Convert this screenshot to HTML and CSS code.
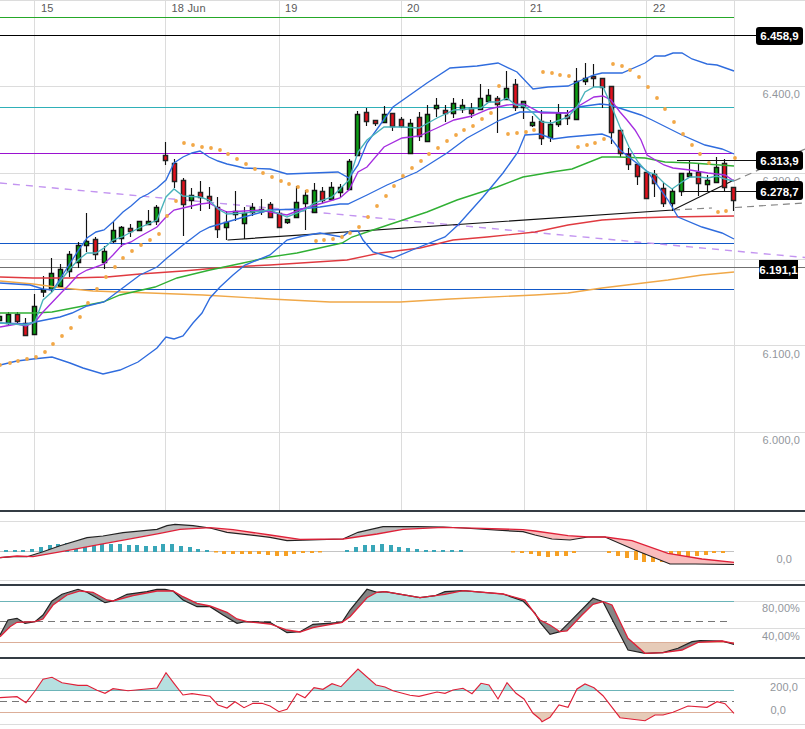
FILE: index.html
```html
<!DOCTYPE html>
<html lang="en">
<head>
<meta charset="utf-8">
<title>Chart</title>
<link rel="stylesheet" href="styles.css">
</head>
<body>
<main class="chart">
<section class="pane pane-main">
<svg class="canvas" viewBox="0 0 805 510" width="805" height="510">
  <path class="grid" d="M0 .5H805M0 86.5H805M0 173.5H805M0 259.5H805M0 345.5H805M0 432.5H805M34.5 0V510M165.5 0V510M279.5 0V510M401.5 0V510M524.5 0V510M646.5 0V510M734.5 0V510"/>
  <g class="dates">
    <text x="41" y="12">15</text><text x="171.5" y="12">18 Jun</text><text x="285" y="12">19</text><text x="407" y="12">20</text><text x="530" y="12">21</text><text x="653" y="12">22</text>
  </g>
  <g class="axis">
    <text x="800" y="98">6.400,0</text><text x="800" y="185">6.300,0</text><text x="800" y="358">6.100,0</text><text x="800" y="444">6.000,0</text>
  </g>
  <path class="h-green" d="M0 17.5H734"/>
  <path class="h-black" d="M0 35.5H760"/>
  <path class="h-teal" d="M0 107.5H734"/>
  <path class="h-purple" d="M0 153.5H734"/>
  <path class="h-blue" d="M0 243.5H734M0 289.5H734"/>
  <path class="h-grey" d="M0 267.5H805"/>
  <path class="h-violet" d="M0 183L805 257.5"/>
  <path class="trend-dash" d="M673 210L712 208M735 207.5L805 203M734 181L805 149"/>
  <path class="trend" d="M227.5 240L673 210L734 180M677 160.5H760M682 191.5H760"/>
  <path class="wick" d="M-.5 313V322M8.5 312V325M17.5 312V323M25.5 318V335M34.5 294V334M43.5 276V297M51.5 258V292M60.5 264V287M69.5 251V277M78.5 242V268M86.5 213V252M95.5 237V260M104.5 246V269M113.5 222V243M121.5 226V247M130.5 224V237M139.5 221V231M148.5 210V225M156.5 205V225M165.5 142V165M174.5 159V188M183.5 178V236M191.5 188V209M200.5 181V211M209.5 187V209M217.5 197V238M226.5 211V240M235.5 191V221M244.5 207V239M252.5 203V216M261.5 199V215M270.5 202V218M279.5 210V227M287.5 219V224M296.5 186V217M305.5 190V230M314.5 183V213M322.5 187V203M331.5 182V199M340.5 184V197M349.5 159V189M357.5 111V155M366.5 108V126M375.5 120V126M384.5 106V123M392.5 113V131M401.5 117V128M410.5 119V153M419.5 112V141M427.5 105V141M436.5 98V117M445.5 105V122M453.5 98V118M462.5 99V113M471.5 103V118M480.5 84V109M488.5 89V101M497.5 96V133M506.5 71V99M515.5 79V111M523.5 101V119M532.5 116V127M541.5 110V145M550.5 120V142M558.5 104V127M567.5 110V125M576.5 68V119M585.5 63V85M593.5 64V87M602.5 78V108M611.5 86V144M620.5 130V157M628.5 148V170M637.5 164V185M646.5 172V198M654.5 170V197M663.5 183V207M672.5 188V211M681.5 173V196M689.5 161V177M698.5 163V196M707.5 175V192M716.5 157V183M724.5 159V192M733.5 187V211"/>
  <path class="body-green" d="M-2.5 316.5h4V320.5h-4zM6.5 314.5h4V323.5h-4zM32.5 306.5h4V334.5h-4zM41.5 290h4V292h-4zM49.5 273.5h4V289.5h-4zM58.5 269.5h4V286.5h-4zM67.5 254.5h4V271.5h-4zM76.5 245.5h4V262.5h-4zM84.5 241.5h4V245.5h-4zM102.5 251.5h4V262.5h-4zM111.5 230.5h4V241.5h-4zM119.5 227.5h4V238.5h-4zM137.5 221.5h4V230.5h-4zM146.5 221.5h4V224.5h-4zM154.5 207.5h4V221.5h-4zM189.5 195.5h4V200.5h-4zM224.5 222.5h4V227.5h-4zM233.5 211.5h4V214.5h-4zM242.5 213.5h4V223.5h-4zM250.5 207.5h4V212.5h-4zM259.5 209.5h4V211.5h-4zM285.5 219.5h4V222.5h-4zM294.5 202.5h4V217.5h-4zM303.5 195.5h4V203.5h-4zM312.5 190.5h4V212.5h-4zM329.5 187.5h4V199.5h-4zM338.5 187.5h4V192.5h-4zM347.5 161.5h4V189.5h-4zM355.5 114.5h4V155.5h-4zM382.5 114.5h4V122.5h-4zM408.5 123.5h4V153.5h-4zM425.5 114.5h4V141.5h-4zM434.5 105.5h4V108.5h-4zM451.5 103.5h4V113.5h-4zM460.5 105.5h4V109.5h-4zM478.5 98.5h4V109.5h-4zM486.5 95.5h4V101.5h-4zM504.5 88.5h4V99.5h-4zM521.5 101.5h4V107.5h-4zM530.5 122.5h4V125.5h-4zM548.5 124.5h4V137.5h-4zM556.5 113.5h4V124.5h-4zM574.5 81.5h4V119.5h-4zM583.5 78.5h4V81.5h-4zM670.5 191.5h4V203.5h-4zM679.5 173.5h4V191.5h-4zM687.5 173.5h4V176.5h-4zM705.5 180.5h4V184.5h-4zM714.5 167.5h4V182.5h-4z"/>
  <path class="body-red" d="M15.5 314.5h4V321.5h-4zM23.5 323.5h4V335.5h-4zM93.5 239.5h4V254.5h-4zM128.5 228.5h4V231.5h-4zM163.5 155.5h4V160.5h-4zM172.5 163.5h4V181.5h-4zM181.5 180.5h4V204.5h-4zM198.5 192.5h4V197.5h-4zM207.5 196.5h4V200.5h-4zM215.5 207.5h4V229.5h-4zM268.5 204.5h4V217.5h-4zM277.5 213.5h4V227.5h-4zM320.5 191.5h4V200.5h-4zM364.5 112.5h4V121.5h-4zM373.5 120.5h4V123.5h-4zM390.5 113.5h4V126.5h-4zM399.5 119.5h4V126.5h-4zM417.5 117.5h4V136.5h-4zM443.5 110.5h4V113.5h-4zM469.5 108.5h4V113.5h-4zM495.5 98.5h4V104.5h-4zM513.5 84.5h4V107.5h-4zM539.5 121.5h4V138.5h-4zM565.5 115.5h4V118.5h-4zM591.5 76.5h4V78.5h-4zM600.5 78.5h4V87.5h-4zM609.5 86.5h4V132.5h-4zM618.5 130.5h4V153.5h-4zM626.5 154.5h4V164.5h-4zM635.5 164.5h4V176.5h-4zM644.5 172.5h4V198.5h-4zM652.5 174.5h4V183.5h-4zM661.5 188.5h4V203.5h-4zM696.5 172.5h4V183.5h-4zM722.5 163.5h4V187.5h-4zM731.5 187.5h4V200.5h-4z"/>
  <polyline class="ma-orange" points="0,281 33,284 63,288 93,291 150,293 203,295 270,299 330,302 400,302 450,299 535,295 568,293 602,288 635,284 668,280 702,275 734,272"/>
  <polyline class="ma-red" points="0,277 33,278 70,278 107,277 140,274 183,271 217,268 250,266 270,265 347,260 380,253 420,248 453,240 487,237 535,232 568,225 602,220 635,218 668,217 734,216"/>
  <polyline class="ma-green" points="0,313 35,313 52,312 78,307 103,302 120,295 155,287 177,278 210,270 243,263 270,257 297,253 342,243 352,237 373,230 403,220 427,212 457,200 497,187 523,177 535,175 552,172 572,169 602,157 618,157 645,158 665,162 692,163 734,166"/>
  <polyline class="bb" points="0,283 30,285 43,289 53,290 67,268 78,251 87,238 96,232 104,230 113,222 123,212 131,206 140,198 148,194 157,188 166,180 174,163 183,157 192,153 200,151 209,157 218,161 227,164 236,166 244,168 270,169 287,174 313,173 338,172 349,178 358,165 367,143 380,125 393,107 427,83 450,68 477,66 498,63 517,72 533,89 548,87 568,86 577,82 594,75 602,73 622,73 645,63 655,56 665,56 673,53 682,53 692,59 707,64 717,65 734,71"/>
  <polyline class="bb" points="0,323 26,324 35,322 60,317 72,313 87,306 104,302 120,290 140,275 157,267 167,258 183,245 200,232 210,227 227,222 244,217 270,210 300,209 320,207 340,204 348,204 367,195 387,185 417,172 447,153 467,138 500,120 520,112 540,112 568,113 578,107 600,104 610,105 641,115 652,120 682,135 705,145 722,149 734,154"/>
  <polyline class="bb" points="0,365 17,361 33,359 52,357 70,363 83,368 103,374 120,370 138,362 157,348 166,337 174,339 183,336 193,323 202,313 210,298 220,287 233,275 245,265 270,255 287,240 303,236 320,233 342,237 350,231 358,231 363,240 373,252 393,258 417,248 445,237 458,225 483,197 503,173 518,152 525,135 540,134 553,139 568,137 602,134 610,137 620,150 648,172 668,200 678,217 702,227 722,233 734,239"/>
  <polyline class="ma-purple" points="0,327 17,324 26,326 35,322 43,312 61,293 69,285 78,275 87,270 96,267 104,264 113,255 122,245 131,242 139,237 157,227 166,217 174,210 183,208 200,204 209,203 218,208 227,212 244,211 262,210 270,212 287,215 305,208 323,203 340,198 349,190 358,172 367,167 384,147 402,138 419,136 437,128 454,120 472,116 489,109 507,105 524,104 541,113 568,113 577,107 594,97 603,96 611,100 620,112 627,120 635,130 641,140 647,155 664,165 673,168 690,170 708,173 725,175 734,181"/>
  <polyline class="ma-teal" points="0,323 26,325 35,322 43,300 52,292 61,280 69,270 78,260 87,253 96,253 104,248 113,240 122,237 139,228 157,220 166,197 174,189 183,196 200,197 209,200 218,209 227,214 244,213 262,211 270,210 287,217 305,210 314,203 332,197 349,180 358,152 367,140 384,127 402,127 419,128 437,118 454,110 481,108 489,102 498,102 507,98 516,105 524,106 533,113 542,122 552,123 568,117 577,107 585,92 594,87 603,87 611,105 620,127 629,147 638,162 647,172 655,174 664,183 672,189 682,182 690,177 699,177 708,178 717,176 725,179 734,181"/>
  <path class="sar" d="M0 365h0M10 363h0M18 361h0M27 359h0M36 357h0M45 352h0M53 344h0M62 336h0M71 328h0M80 317h0M88 303h0M97 289h0M106 277h0M115 267h0M123 258h0M132 251h0M141 245h0M150 240h0M159 234h0M167 216h0M176 201h0M184 143h0M193 145h0M202 147h0M211 148h0M220 150h0M228 154h0M237 159h0M246 164h0M255 169h0M263 173h0M272 177h0M281 181h0M289 184h0M298 187h0M307 191h0M316 241h0M324 240h0M333 239h0M342 237h0M350 233h0M359 227h0M368 217h0M377 206h0M386 196h0M394 186h0M403 176h0M412 168h0M421 161h0M429 154h0M438 148h0M447 141h0M456 135h0M464 130h0M473 126h0M482 119h0M491 113h0M499 86h0M508 134h0M517 133h0M526 132h0M534 130h0M543 72h0M552 73h0M560 75h0M569 76h0M578 147h0M587 145h0M595 143h0M604 139h0M613 64h0M622 66h0M630 70h0M639 77h0M648 87h0M657 98h0M665 109h0M674 122h0M683 134h0M692 145h0M700 154h0M709 163h0M718 212h0M726 211h0M735 158h0"/>
  <g class="badge">
    <rect x="756" y="27" width="47" height="18" rx="3"/><text x="779.5" y="40">6.458,9</text>
    <rect x="756" y="151" width="47" height="19" rx="3"/><text x="779.5" y="164.5">6.313,9</text>
    <rect x="756" y="181" width="47" height="19" rx="3"/><text x="779.5" y="195.5">6.278,7</text>
    <rect x="759" y="260" width="39" height="19"/><text x="778.5" y="274">6.191,1</text>
  </g>
</svg>
</section>

<section class="pane">
<svg class="canvas" viewBox="0 512 805 72" width="805" height="72">
  <defs>
    <clipPath id="macd-up"><rect x="0" y="512" width="210" height="72"/><rect x="343" y="512" width="140" height="72"/></clipPath>
    <clipPath id="macd-down"><rect x="210" y="512" width="133" height="72"/><rect x="483" y="512" width="251" height="72"/></clipPath>
  </defs>
  <path class="grid" d="M0 521.5H805M0 580.5H805"/>
  <path class="zero" d="M0 551.5H734"/>
  <path class="hist-teal" d="M4 550h4v2h-4zM13 550h4v2h-4zM21 550h4v2h-4zM30 549h4v3h-4zM39 547h4v5h-4zM48 545h4v7h-4zM56 544h4v8h-4zM65 543h4v9h-4zM74 542h4v10h-4zM83 542h4v10h-4zM92 544h4v8h-4zM100 544h4v8h-4zM109 544h4v8h-4zM118 544h4v8h-4zM127 545h4v7h-4zM135 545h4v7h-4zM144 546h4v6h-4zM153 546h4v6h-4zM161 544h4v8h-4zM170 544h4v8h-4zM179 546h4v6h-4zM188 547h4v5h-4zM196 549h4v3h-4zM205 550h4v2h-4zM345 550h4v2h-4zM354 547h4v5h-4zM363 545h4v7h-4zM371 545h4v7h-4zM380 544h4v8h-4zM389 545h4v7h-4zM397 547h4v5h-4zM406 548h4v4h-4zM415 549h4v3h-4zM424 550h4v2h-4zM432 550h4v2h-4zM441 550h4v2h-4zM450 550h4v2h-4zM459 550h4v2h-4z"/>
  <path class="hist-orange" d="M214 551h4v1.5h-4zM222 551h4v3h-4zM231 551h4v3h-4zM240 551h4v3h-4zM248 551h4v3h-4zM257 551h4v3h-4zM266 551h4v4h-4zM275 551h4v5h-4zM284 551h4v5h-4zM292 551h4v3h-4zM301 551h4v2h-4zM310 551h4v2h-4zM318 551h4v1.5h-4zM511 551h4v1.5h-4zM520 551h4v2h-4zM529 551h4v3h-4zM537 551h4v5h-4zM546 551h4v6h-4zM555 551h4v5h-4zM564 551h4v5h-4zM572 551h4v2h-4zM607 551h4v2h-4zM616 551h4v5h-4zM625 551h4v7h-4zM634 551h4v9h-4zM642 551h4v11h-4zM651 551h4v11h-4zM660 551h4v11h-4zM669 551h4v10h-4zM677 551h4v8h-4zM686 551h4v7h-4zM695 551h4v5h-4zM704 551h4v4h-4zM712 551h4v2h-4zM721 551h4v2h-4z"/>
  <polygon class="band-grey-light" clip-path="url(#macd-up)" points="0,557.7 13,556.7 27,556.7 43,551.7 60,545.7 87,537.7 103,536 123,532.7 157,529.3 167,525.7 175,524.3 193,525.7 210,528 227,532.3 270,537.3 287,540.7 343,539 358,532.3 383,526.7 417,526.7 443,527 463,528 523,531.7 535,535 552,539 570,540 588,537 605,537 635,550 670,564 695,564 734,564.5 734,562.3 702,559 668,553.3 632,540.7 605,537 588,537 568,535.7 535,531 523,529.7 483,528.3 443,527.3 403,529.3 377,534 343,539 300,539.3 270,535 233,529.7 210,527.7 180,529.3 160,533.3 133,538.3 100,544.3 67,550.7 33,556.7 17,556 0,557.7"/>
  <polygon class="band-pink" clip-path="url(#macd-down)" points="0,557.7 13,556.7 27,556.7 43,551.7 60,545.7 87,537.7 103,536 123,532.7 157,529.3 167,525.7 175,524.3 193,525.7 210,528 227,532.3 270,537.3 287,540.7 343,539 358,532.3 383,526.7 417,526.7 443,527 463,528 523,531.7 535,535 552,539 570,540 588,537 605,537 635,550 670,564 695,564 734,564.5 734,562.3 702,559 668,553.3 632,540.7 605,537 588,537 568,535.7 535,531 523,529.7 483,528.3 443,527.3 403,529.3 377,534 343,539 300,539.3 270,535 233,529.7 210,527.7 180,529.3 160,533.3 133,538.3 100,544.3 67,550.7 33,556.7 17,556 0,557.7"/>
  <polyline class="osc-black" points="0,557.7 13,556.7 27,556.7 43,551.7 60,545.7 87,537.7 103,536 123,532.7 157,529.3 167,525.7 175,524.3 193,525.7 210,528 227,532.3 270,537.3 287,540.7 343,539 358,532.3 383,526.7 417,526.7 443,527 463,528 523,531.7 535,535 552,539 570,540 588,537 605,537 635,550 670,564 695,564 734,564.5"/>
  <polyline class="osc-red" points="0,557.7 17,556 33,556.7 67,550.7 100,544.3 133,538.3 160,533.3 180,529.3 210,527.7 233,529.7 270,535 300,539.3 343,539 377,534 403,529.3 443,527.3 483,528.3 523,529.7 535,531 568,535.7 588,537 605,537 632,540.7 668,553.3 702,559 734,562.3"/>
  <text class="axis" x="792" y="563">0,0</text>
</svg>
</section>

<section class="pane">
<svg class="canvas" viewBox="0 586 805 71" width="805" height="71">
  <defs>
    <clipPath id="stoch-high"><rect x="0" y="586" width="734" height="15"/></clipPath>
    <clipPath id="stoch-low"><rect x="0" y="642" width="734" height="15"/></clipPath>
  </defs>
  <path class="grid" d="M0 601.5H805M0 628.5H805"/>
  <polygon class="fill-teal" clip-path="url(#stoch-high)" points="0,636.7 10,626.7 17,622.3 35,621.7 43,619 53,605 67,595 80,591 93,592.3 107,600 113,601 133,595.7 157,591 173,591 183,596.7 197,603.3 210,606 227,612.3 237,619 247,621.7 270,624 287,630 300,632 313,627.7 342,622.3 350,616.7 367,597.7 377,592.3 385,591.7 420,597.7 445,594.3 463,590.7 503,594 525,600 540,620 550,625 560,631.7 567,631 582,615 593,604.3 603,601.7 612,605 628,638 734,638 0,638"/>
  <polygon class="fill-salmon" clip-path="url(#stoch-low)" points="612,605 628,638.3 645,653.3 663,652.7 682,650 698,642.3 722,641 734,643.3 734,605"/>
  <path class="h-osc-teal" d="M0 601.5H734"/>
  <path class="h-osc-salmon" d="M0 642.5H734"/>
  <path class="h-osc-dash" d="M0 621.5H731"/>
  <polygon class="band-grey" points="0,635 8,620 17,618.3 25,623.3 35,621.7 43,615 52,601 62,594.3 78,589.3 87,592.3 105,602.7 113,601 127,594.3 147,591.7 157,589.3 165,589.3 173,591 183,600 197,606.7 210,606.7 223,615 237,623.3 245,621.7 270,622.3 287,632.7 300,631.7 313,624.3 342,622.3 350,610 367,589.3 377,592.3 385,591.7 420,597.7 435,595.7 445,591.7 463,590.7 503,594 523,601 535,613 540,622.3 550,634.3 560,631.7 570,621.7 593,598.3 603,601.7 628,650 645,653.3 663,652.7 678,648.3 692,641.7 700,640.7 722,641 734,644.3 734,643.3 722,641 698,642.3 682,650 663,652.7 645,653.3 628,638.3 612,605 603,601.7 593,604.3 582,615 567,631 560,631.7 550,625 540,620 535,614 525,600 503,594 463,590.7 445,594.3 420,597.7 385,591.7 377,592.3 367,597.7 350,616.7 342,622.3 313,627.7 300,632 287,630 270,624 247,621.7 237,619 227,612.3 210,606 197,603.3 183,596.7 173,591 157,591 133,595.7 113,601 107,600 93,592.3 80,591 67,595 53,605 43,619 35,621.7 17,622.3 10,626.7 0,636.7"/>
  <polyline class="osc-black" points="0,635 8,620 17,618.3 25,623.3 35,621.7 43,615 52,601 62,594.3 78,589.3 87,592.3 105,602.7 113,601 127,594.3 147,591.7 157,589.3 165,589.3 173,591 183,600 197,606.7 210,606.7 223,615 237,623.3 245,621.7 270,622.3 287,632.7 300,631.7 313,624.3 342,622.3 350,610 367,589.3 377,592.3 385,591.7 420,597.7 435,595.7 445,591.7 463,590.7 503,594 523,601 535,613 540,622.3 550,634.3 560,631.7 570,621.7 593,598.3 603,601.7 628,650 645,653.3 663,652.7 678,648.3 692,641.7 700,640.7 722,641 734,644.3"/>
  <polyline class="osc-red" points="0,636.7 10,626.7 17,622.3 35,621.7 43,619 53,605 67,595 80,591 93,592.3 107,600 113,601 133,595.7 157,591 173,591 183,596.7 197,603.3 210,606 227,612.3 237,619 247,621.7 270,624 287,630 300,632 313,627.7 342,622.3 350,616.7 367,597.7 377,592.3 385,591.7 420,597.7 445,594.3 463,590.7 503,594 525,600 535,614 540,620 550,625 560,631.7 567,631 582,615 593,604.3 603,601.7 612,605 628,638.3 645,653.3 663,652.7 682,650 698,642.3 722,641 734,643.3"/>
  <text class="axis" x="800" y="612">80,00%</text>
  <text class="axis" x="800" y="640">40,00%</text>
</svg>
</section>

<section class="pane">
<svg class="canvas" viewBox="0 659 805 70" width="805" height="70">
  <defs>
    <clipPath id="cci-high"><rect x="0" y="659" width="734" height="31"/></clipPath>
    <clipPath id="cci-low"><rect x="0" y="712" width="734" height="17"/></clipPath>
  </defs>
  <path class="grid" d="M0 678.5H805M0 724.5H805"/>
  <polygon class="fill-teal" clip-path="url(#cci-high)" points="0,697.7 17,696.7 26,702.7 35,691 43,679.3 52,677.3 62,682.7 78,685.3 87,685.3 97,690.3 105,693.3 113,688.7 128,690.7 157,688 166,672.7 174,683.3 183,695 192,693.7 210,696.3 218,705 227,708 235,701.7 244,707.7 253,703.3 262,703.3 270,706 279,711.7 287,709.3 297,693.7 305,697.7 314,687.7 323,689.3 332,683.7 341,686.7 358,669 376,685 385,687 393,690.7 410,695.3 419,696.3 437,692 445,693.3 453,690 463,688.3 472,693.7 481,683.3 489,685 498,699 507,682.7 516,693.3 524,699 533,713.3 540,719 542,721.7 550,717.3 559,705 568,707.3 577,689 585,684 594,687.7 603,695.7 620,717.7 645,720.7 655,715 663,715 673,712.3 688,706 707,707.3 717,701.7 725,703.7 734,713.3 734,729 0,729"/>
  <polygon class="fill-salmon" clip-path="url(#cci-low)" points="0,697.7 17,696.7 26,702.7 35,691 43,679.3 52,677.3 62,682.7 78,685.3 87,685.3 97,690.3 105,693.3 113,688.7 128,690.7 157,688 166,672.7 174,683.3 183,695 192,693.7 210,696.3 218,705 227,708 235,701.7 244,707.7 253,703.3 262,703.3 270,706 279,711.7 287,709.3 297,693.7 305,697.7 314,687.7 323,689.3 332,683.7 341,686.7 358,669 376,685 385,687 393,690.7 410,695.3 419,696.3 437,692 445,693.3 453,690 463,688.3 472,693.7 481,683.3 489,685 498,699 507,682.7 516,693.3 524,699 533,713.3 540,719 542,721.7 550,717.3 559,705 568,707.3 577,689 585,684 594,687.7 603,695.7 620,717.7 645,720.7 655,715 663,715 673,712.3 688,706 707,707.3 717,701.7 725,703.7 734,713.3 734,659 0,659"/>
  <path class="h-osc-teal" d="M0 690.5H734"/>
  <path class="h-osc-salmon" d="M0 712.5H734"/>
  <path class="h-osc-dash" d="M0 701.5H734"/>
  <polyline class="osc-red thin" points="0,697.7 17,696.7 26,702.7 35,691 43,679.3 52,677.3 62,682.7 78,685.3 87,685.3 97,690.3 105,693.3 113,688.7 128,690.7 157,688 166,672.7 174,683.3 183,695 192,693.7 210,696.3 218,705 227,708 235,701.7 244,707.7 253,703.3 262,703.3 270,706 279,711.7 287,709.3 297,693.7 305,697.7 314,687.7 323,689.3 332,683.7 341,686.7 358,669 376,685 385,687 393,690.7 410,695.3 419,696.3 437,692 445,693.3 453,690 463,688.3 472,693.7 481,683.3 489,685 498,699 507,682.7 516,693.3 524,699 533,713.3 540,719 542,721.7 550,717.3 559,705 568,707.3 577,689 585,684 594,687.7 603,695.7 620,717.7 645,720.7 655,715 663,715 673,712.3 688,706 707,707.3 717,701.7 725,703.7 734,713.3"/>
  <text class="axis" x="798" y="691">200,0</text>
  <text class="axis" x="786" y="713.5">0,0</text>
</svg>
</section>
</main>
</body>
</html>
```
FILE: styles.css
```css
html, body {
  margin: 0;
  padding: 0;
  background: #fff;
}
.chart {
  display: flex;
  flex-direction: column;
  width: 805px;
  height: 729px;
  overflow: hidden;
  font-family: "Liberation Sans", Arial, sans-serif;
}
.pane {
  border-top: 2px solid #343c44;
  line-height: 0;
}
.pane-main {
  border-top: 0;
}
.canvas {
  display: block;
  overflow: hidden;
}
.canvas path, .canvas polyline {
  fill: none;
}
.grid { stroke: #dcdcdc; stroke-width: 1; }
.dates text { font-size: 11px; fill: #5a5a5a; letter-spacing: .2px; }
.axis, .axis text { font-size: 11px; fill: #92969c; text-anchor: end; letter-spacing: .1px; }
.h-green { stroke: #25a828; stroke-width: 1.15; }
.h-black { stroke: #000; stroke-width: 1.15; }
.h-teal { stroke: #2fb0b8; stroke-width: 1.15; }
.h-purple { stroke: #9a12d0; stroke-width: 1.15; }
.h-blue { stroke: #1258c8; stroke-width: 1.15; }
.h-grey { stroke: #707070; stroke-width: 1.15; }
.h-violet { stroke: #c394f0; stroke-width: 1.4; stroke-dasharray: 7 6; }
.trend { stroke: #111; stroke-width: 1.2; }
.trend-dash { stroke: #858585; stroke-width: 1.2; stroke-dasharray: 7 5; }
.wick { stroke: #111; stroke-width: 1.15; }
.canvas .body-green { fill: #0c9e14; stroke: #111; stroke-width: 1.5; }
.canvas .body-red { fill: #e2101c; stroke: #222; stroke-width: 1.5; }
.ma-orange { stroke: #f0a848; stroke-width: 1.35; }
.ma-red { stroke: #e03a40; stroke-width: 1.35; }
.ma-green { stroke: #30b034; stroke-width: 1.35; }
.bb { stroke: #2f6cde; stroke-width: 1.35; }
.ma-purple { stroke: #a52ee0; stroke-width: 1.35; }
.ma-teal { stroke: #48b2ba; stroke-width: 1.35; }
.sar { stroke: #f2a848; stroke-width: 3.8; stroke-linecap: round; }
.badge rect { fill: #000; }
.badge text { font-size: 11.5px; font-weight: 700; fill: #fff; text-anchor: middle; }
.zero { stroke: #c4c4c4; }
.canvas .hist-teal { fill: #38a6b8; }
.canvas .hist-orange { fill: #f6a024; }
.band-grey-light { fill: #bdbdbd; }
.band-pink { fill: #f9bcbc; }
.band-grey { fill: #858585; }
.fill-teal { fill: #b6e0e0; }
.fill-salmon { fill: #e6cbb8; }
.osc-black { stroke: #222; stroke-width: 1.2; }
.osc-red { stroke: #df2038; stroke-width: 1.3; }
.osc-red.thin { stroke-width: 1.15; }
.h-osc-teal { stroke: #6cb4b8; stroke-width: 1.15; }
.h-osc-salmon { stroke: #dcae98; stroke-width: 1.15; }
.h-osc-dash { stroke: #777; stroke-dasharray: 7 5; stroke-width: 1.1; }
```
